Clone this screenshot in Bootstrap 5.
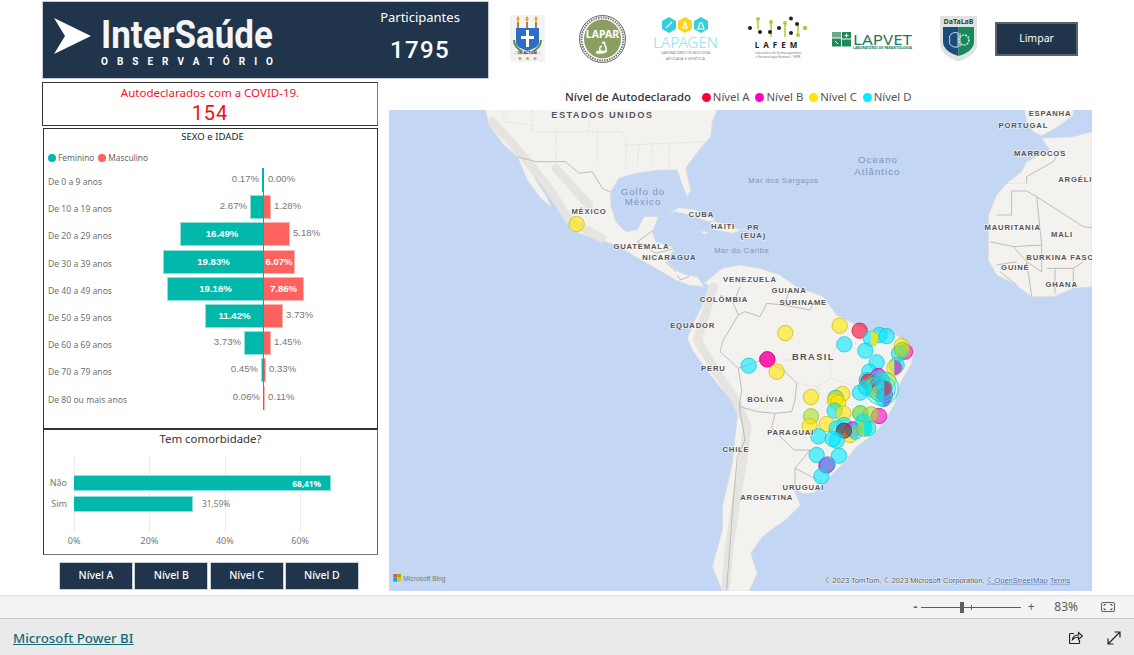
<!DOCTYPE html>
<html lang="pt-BR">
<head>
    <meta charset="UTF-8">
    <meta name="viewport" content="width=device-width, initial-scale=1.0">
    <title>InterSaúde Observatório</title>
    <link href="https://cdn.jsdelivr.net/npm/bootstrap@5.3.3/dist/css/bootstrap.min.css" rel="stylesheet">
    <style>
        html, body { height: 655px; overflow: hidden; }
        body { font-family: "Noto Sans", "Open Sans", sans-serif; color: #333; background: #fff; }

        .pbi-report { height: 595px; padding: 1px 0 0 42px; }

        /* top band */
        .brand-band { width: 447px; height: 78px; background: #20344c; color: #fff; box-shadow: 0 0 0 1px #c6ccd4 inset; }
        .brand-logo { width: 300px; height: 78px; }
        .brand-count { width: 130px; margin-left: 13px; }
        .brand-count-label { font-size: 13px; line-height: 18px; margin-top: 7px; }
        .brand-count-value { font-family: Roboto, sans-serif; font-weight: 500; font-size: 24px; letter-spacing: 1.3px; line-height: 32px; margin-top: 8px; }
        .lab-logo { flex: none; display: block; margin-bottom: 3px; overflow: visible; }
        .lab-uepb { width: 35px; height: 47px; margin-left: 21px; }
        .lab-lapar { width: 47px; height: 48px; margin-left: 34px; }
        .lab-lapagen { width: 65px; height: 44px; margin-left: 27px; }
        .lab-lafem { width: 60px; height: 43px; margin-left: 30px; }
        .lab-lapvet { width: 80px; height: 18px; margin: 2px 0 0 24px; }
        .lab-datalab { width: 39px; height: 47px; margin-left: 27px; }
        .btn-limpar { flex: none; width: 83px; height: 34px; margin: 0 0 3px 17px; padding: 0; background: #20344c; color: #fff; border: 2px solid #5d6268; border-radius: 0; font-size: 10.5px; }

        .body-row { margin-top: 3px; }

        /* left column */
        .side-col { width: 336px; flex: none; }
        .stat-box { height: 44px; border: 1px solid #333; border-right-color: #777; text-align: center; color: #f5132a; }
        .stat-box-label { font-size: 11.5px; line-height: 15px; margin-top: 2px; }
        .stat-box-value { font-family: Roboto, sans-serif; font-size: 20px; line-height: 24px; letter-spacing: 1px; margin-top: 1px; color: #f20d0d; }

        .pyr-box { height: 301px; margin: 2px 0 0 1px; border: 1px solid #333; padding: 0 0 0 4px; }
        .pyr-title { font-size: 9.6px; line-height: 14px; text-align: center; margin-top: 1px; color: #222; }
        .pyr-legend { font-size: 8.3px; color: #666; line-height: 12px; margin-top: 8px; margin-bottom: 4px; gap: 4px; }
        .pyr-dot { width: 8px; height: 8px; border-radius: 50%; display: inline-block; margin-right: 2px; vertical-align: -1px; }
        .dot-f { background: #01b8aa; }
        .dot-m { background: #fd625e; }
        .pyr-row { height: 27.2px; font-size: 9.6px; color: #777; }
        .pyr-row:last-child { height: 24px; }
        .pyr-label { width: 80px; flex: none; font-size: 8.6px; line-height: 24px; padding-top: 2px; color: #707070; white-space: nowrap; }
        .pyr-left { width: 136px; flex: none; border-right: 1px solid #7a7a7a; }
        .pyr-right { flex: 1; }
        .pyr-val { font-family: "Liberation Sans", sans-serif; line-height: 21px; margin: 0 3px; white-space: nowrap; }
        .pyr-bar { height: 24px; flex: none; font-family: "Liberation Sans", sans-serif; font-weight: 700; line-height: 22px; color: #fff; text-align: center; white-space: nowrap; }
        .bar-f { background: #01b8aa; border: 1px solid #8fe0d7; border-right: 0; }
        .bar-m { background: #fd625e; border: 1px solid #fdb3b0; border-left: 0; }

        .cmb-box { height: 126px; margin: 0 0 0 1px; border: 1px solid #333; border-color: #333 #666 #777 #333; }
        .cmb-title { font-size: 11.4px; line-height: 16px; text-align: center; margin-top: 1px; color: #333; }
        .cmb-body { margin-top: 9px; }
        .cmb-names { width: 30px; flex: none; padding: 19px 7px 0 0; text-align: right; font-size: 9px; color: #777; }
        .cmb-name { height: 16px; line-height: 15px; margin-bottom: 5px; }
        .cmb-plot { width: 270px; height: 76px; padding-top: 19px; background-image: repeating-linear-gradient(to right, #ececec 0, #ececec 1px, transparent 1px, transparent 75.33px); }
        .cmb-bar-row { height: 16px; margin-bottom: 5px; font-size: 8.3px; line-height: 16px; color: #777; }
        .cmb-bar { height: 16px; background: #01b8aa; border: 1px solid #8fe0d7; border-left: 0; color: #fff; font-weight: 700; text-align: right; padding-right: 9px; }
        .cmb-note { margin-left: 9px; }
        .cmb-ticks { margin: 3px 0 0 -7.5px; font-size: 9px; line-height: 12px; color: #777; }
        .cmb-tick { width: 75.33px; flex: none; text-align: center; }
        .level-row { margin: 7px 0 0 17px; gap: 1.3px; }
        .level-btn { width: 74px; height: 28px; padding: 0; border: 1px solid #c9d1da; border-radius: 0; background: #20344c; color: #fff; font-size: 10.5px; font-weight: 500; }

        /* map column */
        .map-col { width: 703px; flex: none; margin-left: 11px; }
        .map-legend { height: 28px; padding: 7px 0 0 176px; font-size: 11.3px; line-height: 15px; color: #555; white-space: nowrap; }
        .map-legend-title { color: #333; font-weight: 500; margin-right: 8px; }
        .map-legend-item { margin-right: 3px; }
        .map-dot { width: 9px; height: 9px; border-radius: 50%; display: inline-block; margin-right: 2px; vertical-align: -.5px; }
        .map-box { width: 703px; height: 481px; display: block; background: #c3d7f5; }
        .land { fill: #f3f2ef; stroke: #dcdbd7; stroke-width: 2; }
        .relief { fill: none; stroke: #e5e4e0; stroke-width: 26; stroke-linecap: round; stroke-linejoin: round; }
        .bd { fill: none; stroke: #b2b2b0; stroke-width: 2.5; }
        .bd-soft { fill: none; stroke: #d6d5d1; stroke-width: 2; stroke-dasharray: 6 4; }
        .ml { font-family: "Liberation Sans", sans-serif; font-weight: 700; font-size: 23px; letter-spacing: 2.5px; fill: #555; text-anchor: middle; paint-order: stroke; stroke: #fff; stroke-opacity: .6; stroke-width: 4px; }
        .ml-big { font-size: 28px; letter-spacing: 4px; }
        .ml-sea { font-family: "Liberation Sans", sans-serif; font-size: 23px; letter-spacing: 1.5px; fill: #7d94bb; text-anchor: middle; }
        .ml-ocean { font-size: 29px; letter-spacing: 3px; }
        .ml-attr { font-family: "Liberation Sans", sans-serif; font-size: 22.7px; fill: #555; paint-order: stroke; stroke: #fff; stroke-opacity: .7; stroke-width: 3px; }
        .ml-link { fill: #3f5fa8; text-decoration: underline; }
        .ml-bing { font-family: "Liberation Sans", sans-serif; font-size: 20px; fill: #777; }

        /* bottom bars */
        .zoom-bar { height: 24px; background: #f3f3f3; border-top: 1px solid #e2e2e2; border-bottom: 1px solid #c8c8c8; font-size: 12px; color: #605e5c; padding-right: 19px; }
        .zoom-sign { width: 12px; text-align: center; line-height: 20px; }
        .zoom-track { width: 100px; height: 1px; background: #605e5c; position: relative; margin: 0 4px 0 0; }
        .zoom-thumb { position: absolute; left: 39px; top: -5px; width: 4px; height: 11px; background: #605e5c; }
        .zoom-mid { position: absolute; left: 50px; top: -2px; width: 1px; height: 5px; background: #605e5c; }
        .zoom-pct { margin: 0 23px 0 17px; }
        .pbi-foot { height: 37px; background: #eaeaea; padding: 0 13px; }
        .pbi-link { font-size: 13.3px; font-weight: 500; color: #146c78; margin-top: 2px; }
    </style>
</head>
<body>
    <main class="pbi-report">
        <!-- top band with the lab logos -->
        <div class="d-flex align-items-center">
            <div class="brand-band d-flex flex-none">
                <svg class="brand-logo" viewBox="0 0 300 78">
                    <polygon points="12,17 49,35 12,53 23,35" fill="#fff"/>
                    <text x="59" y="47" font-family="Roboto, sans-serif" font-weight="700" font-size="39" fill="#f4f5f6" textLength="172" lengthAdjust="spacingAndGlyphs">InterSaúde</text>
                    <text x="59" y="64" font-family="Roboto, sans-serif" font-weight="700" font-size="10" fill="#fff" textLength="172">OBSERVATÓRIO</text>
                </svg>
                <div class="brand-count text-center">
                    <div class="brand-count-label">Participantes</div>
                    <div class="brand-count-value">1795</div>
                </div>
            </div>

            <svg class="lab-logo lab-uepb" viewBox="0 0 35 47">
                <rect width="35" height="47" fill="#f4f3f3"/>
                <path d="M8 1c2 2 2 4 0 6-2-2-2-4 0-6zM17 1c2 2 2 4 0 6-2-2-2-4 0-6zM26 1c2 2 2 4 0 6-2-2-2-4 0-6z" fill="#eba52a"/>
                <path d="M7 7h2v6H7zM16 7h2v6h-2zM25 7h2v6h-2z" fill="#a8863f"/>
                <path d="M6 13h23v14c0 5-6 7-11.5 9C12 34 6 32 6 27z" fill="#2a6fc4"/>
                <path d="M16 15h3v6h5v3h-5v8h-3v-8h-5v-3h5z" fill="#fff"/>
                <path d="M4 25c0 7 5 10 9 12M31 25c0 7-5 10-9 12" stroke="#5e8c4f" stroke-width="2" fill="none"/>
                <rect x="4" y="36" width="27" height="4" fill="#e8e4de"/>
                <text x="17.5" y="39.4" font-size="3.8" font-weight="700" text-anchor="middle" fill="#333">IN ALTUM</text>
                <circle cx="10" cy="43.5" r="1.6" fill="#c9a08e"/><circle cx="17.5" cy="43.5" r="1.6" fill="#c9a08e"/><circle cx="25" cy="43.5" r="1.6" fill="#c9a08e"/>
            </svg>
            <svg class="lab-logo lab-lapar" viewBox="0 0 47 48">
                <ellipse cx="23.5" cy="24" rx="23" ry="23.5" fill="#fff" stroke="#666" stroke-width="1"/>
                <ellipse cx="23.5" cy="24" rx="21" ry="21.5" fill="none" stroke="#777" stroke-width="2" stroke-dasharray="1.5 1"/>
                <ellipse cx="23.5" cy="24" rx="18.5" ry="19.5" fill="#8c9f63"/>
                <text x="23.5" y="23" font-size="10.5" font-weight="700" text-anchor="middle" fill="#fff">LAPAR</text>
                <path d="M25 27l2 6c1 3-1 5-4 5h-5v-1.500h10M23 28l3-1M22 36c-2-1-2-4 1-5" stroke="#fff" stroke-width="1.5" fill="none"/>
            </svg>
            <svg class="lab-logo lab-lapagen" viewBox="0 0 65 44">
                <polygon points="16,0 23,4 23,12 16,16 9,12 9,4" fill="#35cfdc"/>
                <polygon points="32,0 39,4 39,12 32,16 25,12 25,4" fill="#ffd21f"/>
                <polygon points="48,0 55,4 55,12 48,16 41,12 41,4" fill="#35cfdc"/>
                <path d="M13 11l6-6M30 11h4l-2-6zM45 12h6l-2-6h-2z" stroke="#fff" stroke-width="1.2" fill="none"/>
                <text x="0" y="30.5" font-size="15" font-weight="300" fill="#8de3e8" textLength="65" lengthAdjust="spacingAndGlyphs">LAPAGEN</text>
                <text x="32.5" y="36.5" font-size="3.7" text-anchor="middle" fill="#888">LABORATÓRIO DE BIOLOGIA</text>
                <text x="32.5" y="42.5" font-size="3.7" text-anchor="middle" fill="#888">APLICADA E GENÉTICA</text>
            </svg>
            <svg class="lab-logo lab-lafem" viewBox="0 0 60 43">
                <path d="M10 2v10M23 6v14M37 6v14M50 6v12" stroke="#a9cf38" stroke-width="1.5" fill="none"/>
                <circle cx="10" cy="2" r="2" fill="#a9cf38"/><circle cx="23" cy="5" r="2" fill="#a9cf38"/><circle cx="37" cy="6" r="2" fill="#a9cf38"/><circle cx="57" cy="11" r="2.2" fill="#a9cf38"/><circle cx="50" cy="18" r="2" fill="#a9cf38"/>
                <circle cx="2" cy="11" r="2" fill="#222"/><circle cx="12" cy="15" r="2" fill="#222"/><circle cx="22" cy="15" r="2" fill="#222"/><circle cx="31" cy="11" r="2" fill="#222"/><circle cx="43" cy="1.5" r="2" fill="#222"/><circle cx="49" cy="7" r="2" fill="#222"/><circle cx="43" cy="16" r="2" fill="#222"/>
                <text x="30" y="31" font-size="8" font-weight="700" text-anchor="middle" fill="#222" letter-spacing="4">LAFEM</text>
                <text x="30" y="36.5" font-size="3" text-anchor="middle" fill="#777">Laboratório de Farmacogenética</text>
                <text x="30" y="41" font-size="3" text-anchor="middle" fill="#777">e Farmacologia Humana - UEPB</text>
            </svg>
            <svg class="lab-logo lab-lapvet" viewBox="0 0 80 18">
                <rect x="0" y="0" width="9" height="5.5" fill="#6fa88c"/><rect x="0" y="6.5" width="9" height="8" fill="#1f8a5a"/>
                <rect x="10" y="0" width="9" height="6.5" fill="#1f8a5a"/><rect x="10" y="7.5" width="9" height="7" fill="#1f8a5a"/>
                <path d="M14.500 1.500v4M12.500 3.500h4M3 9l3 3" stroke="#fff" stroke-width="1"/>
                <text x="21" y="12.5" font-size="15" fill="#1d7a5e" textLength="59" lengthAdjust="spacingAndGlyphs">LAPVET</text>
                <text x="21" y="17" font-size="3" font-weight="700" fill="#1d7a5e" textLength="59" lengthAdjust="spacingAndGlyphs">LABORATÓRIO DE PARASITOLOGIA</text>
            </svg>
            <svg class="lab-logo lab-datalab" viewBox="0 0 39 47">
                <path d="M1 1h37v28c0 9-10 15-18.500 17.500C11 44 1 38 1 29z" fill="#dfe3e2"/>
                <text x="19.5" y="9" font-size="7.5" font-weight="700" text-anchor="middle" fill="#1d4c3c" textLength="30" lengthAdjust="spacingAndGlyphs">DaTaLaB</text>
                <path d="M4 12h15.500v29C12 39 4 34 4 27z" fill="#1c4b7c"/>
                <path d="M19.500 12H35v15c0 7-8 12-15.500 14z" fill="#17885a"/>
                <path d="M19 18c-6-2-10 3-8 7-2 3 1 8 8 7zM21 18v14" stroke="#cfe0e6" stroke-width="1" fill="none"/>
                <circle cx="25" cy="25" r="5" fill="none" stroke="#d5ead8" stroke-width="1.6" stroke-dasharray="2 1"/>
            </svg>
            <button type="button" class="btn btn-limpar">Limpar</button>
        </div>

        <div class="d-flex body-row">
            <div class="side-col">
                <div class="stat-box">
                    <div class="stat-box-label">Autodeclarados com a COVID-19.</div>
                    <div class="stat-box-value">154</div>
                </div>

                <section class="pyr-box">
                    <div class="pyr-title">SEXO e IDADE</div>
                    <div class="pyr-legend d-flex">
                        <span><i class="pyr-dot dot-f"></i>Feminino</span>
                        <span><i class="pyr-dot dot-m"></i>Masculino</span>
                    </div>
                    <div class="d-flex pyr-row">
                        <div class="pyr-label">De 0 a 9 anos</div>
                        <div class="pyr-left d-flex justify-content-end"><span class="pyr-val">0.17%</span><div class="pyr-bar bar-f" style="width:1px;border:0"></div></div>
                        <div class="pyr-right d-flex"><div class="pyr-bar" style="width:1px"></div><span class="pyr-val">0.00%</span></div>
                    </div>
                    <div class="d-flex pyr-row">
                        <div class="pyr-label">De 10 a 19 anos</div>
                        <div class="pyr-left d-flex justify-content-end"><span class="pyr-val">2.67%</span><div class="pyr-bar bar-f" style="width:13px"></div></div>
                        <div class="pyr-right d-flex"><div class="pyr-bar bar-m" style="width:7px"></div><span class="pyr-val">1.28%</span></div>
                    </div>
                    <div class="d-flex pyr-row">
                        <div class="pyr-label">De 20 a 29 anos</div>
                        <div class="pyr-left d-flex justify-content-end"><div class="pyr-bar bar-f" style="width:83px">16.49%</div></div>
                        <div class="pyr-right d-flex"><div class="pyr-bar bar-m" style="width:26px"></div><span class="pyr-val">5.18%</span></div>
                    </div>
                    <div class="d-flex pyr-row">
                        <div class="pyr-label">De 30 a 39 anos</div>
                        <div class="pyr-left d-flex justify-content-end"><div class="pyr-bar bar-f" style="width:100px">19.83%</div></div>
                        <div class="pyr-right d-flex"><div class="pyr-bar bar-m" style="width:31px">6.07%</div></div>
                    </div>
                    <div class="d-flex pyr-row">
                        <div class="pyr-label">De 40 a 49 anos</div>
                        <div class="pyr-left d-flex justify-content-end"><div class="pyr-bar bar-f" style="width:96px">19.16%</div></div>
                        <div class="pyr-right d-flex"><div class="pyr-bar bar-m" style="width:40px">7.86%</div></div>
                    </div>
                    <div class="d-flex pyr-row">
                        <div class="pyr-label">De 50 a 59 anos</div>
                        <div class="pyr-left d-flex justify-content-end"><div class="pyr-bar bar-f" style="width:58px">11.42%</div></div>
                        <div class="pyr-right d-flex"><div class="pyr-bar bar-m" style="width:19px"></div><span class="pyr-val">3.73%</span></div>
                    </div>
                    <div class="d-flex pyr-row">
                        <div class="pyr-label">De 60 a 69 anos</div>
                        <div class="pyr-left d-flex justify-content-end"><span class="pyr-val">3.73%</span><div class="pyr-bar bar-f" style="width:19px"></div></div>
                        <div class="pyr-right d-flex"><div class="pyr-bar bar-m" style="width:7px"></div><span class="pyr-val">1.45%</span></div>
                    </div>
                    <div class="d-flex pyr-row">
                        <div class="pyr-label">De 70 a 79 anos</div>
                        <div class="pyr-left d-flex justify-content-end"><span class="pyr-val">0.45%</span><div class="pyr-bar bar-f" style="width:2px"></div></div>
                        <div class="pyr-right d-flex"><div class="pyr-bar bar-m" style="width:2px"></div><span class="pyr-val">0.33%</span></div>
                    </div>
                    <div class="d-flex pyr-row">
                        <div class="pyr-label">De 80 ou mais anos</div>
                        <div class="pyr-left d-flex justify-content-end"><span class="pyr-val">0.06%</span></div>
                        <div class="pyr-right d-flex"><div class="pyr-bar bar-m" style="width:1px"></div><span class="pyr-val">0.11%</span></div>
                    </div>
                </section>

                <section class="cmb-box">
                    <div class="cmb-title">Tem comorbidade?</div>
                    <div class="cmb-body d-flex">
                        <div class="cmb-names">
                            <div class="cmb-name">Não</div>
                            <div class="cmb-name">Sim</div>
                        </div>
                        <div class="cmb-plot">
                            <div class="cmb-bar-row d-flex"><div class="cmb-bar" style="width:257px">68,41%</div></div>
                            <div class="cmb-bar-row d-flex"><div class="cmb-bar" style="width:119px"></div><span class="cmb-note">31,59%</span></div>
                        </div>
                    </div>
                    <div class="cmb-ticks d-flex">
                        <span class="cmb-tick">0%</span><span class="cmb-tick">20%</span><span class="cmb-tick">40%</span><span class="cmb-tick">60%</span>
                    </div>
                </section>

                <div class="level-row d-flex">
                    <button type="button" class="btn level-btn">Nível A</button>
                    <button type="button" class="btn level-btn">Nível B</button>
                    <button type="button" class="btn level-btn">Nível C</button>
                    <button type="button" class="btn level-btn">Nível D</button>
                </div>
            </div>

            <div class="map-col">
                <div class="map-legend">
                    <span class="map-legend-title">Nível de Autodeclarado</span>
                    <span class="map-legend-item"><i class="map-dot" style="background:#ff0033"></i>Nível A</span>
                    <span class="map-legend-item"><i class="map-dot" style="background:#ff00c8"></i>Nível B</span>
                    <span class="map-legend-item"><i class="map-dot" style="background:#ffe600"></i>Nível C</span>
                    <span class="map-legend-item"><i class="map-dot" style="background:#00eeff"></i>Nível D</span>
                </div>

                <!-- map drawn at 3x: 1 unit = 1/3 px -->
                <svg class="map-box" viewBox="0 0 2109 1443">
                    <g transform="translate(0,-15)">
                        <path class="land" d="M285 0L300 60 345 120 385 155 392 170 415 225 455 280 487 307 470 270 440 225 415 170 425 172 470 225 520 295 530 340 545 375 600 395 680 420 740 455 800 490 860 525 900 540 945 545 925 515 890 510 860 495 830 465 860 430 800 410 790 380 808 335 765 335 745 375 710 380 680 350 665 300 665 260 690 220 740 205 810 195 865 195 880 240 895 275 905 255 890 190 930 135 965 95 970 50 990 0Z"/>
                        <path class="land" d="M840 325L870 308 920 315 980 345 960 350 900 330 860 320Z"/>
                        <path class="land" d="M965 348L1000 355 1056 375 1030 385 965 372Z"/>
                        <path class="land" d="M932 378L960 382 945 388Z"/>
                        <path class="relief" d="M310 50L400 150 480 250 545 350 640 400M500 190L600 300"/>
                        <path class="bd" d="M385 155L440 170 530 170 570 205 610 200 640 250 665 262"/>
                        <path class="bd-soft" d="M345 15V50L430 60V15M430 60V80L600 80V15M600 80H700L715 120 960 110M500 80V165M625 80V180M710 120V190M750 120L745 180M790 115V185M840 115V190"/>
                        <path class="bd" d="M745 410L790 378M745 410L800 445 860 430M830 470L860 500M865 510L875 525 900 515"/>
                    </g>
                    <g transform="translate(1053,-15)">
                        <path class="land" d="M850 0L860 50 880 80 905 92 945 70 975 50 1000 30 1000 0Z"/>
                        <path class="land" d="M905 100L1000 95 1056 80V545L1000 550 940 575 875 575 820 535 770 510 745 465 745 400 745 330 770 270 800 235 845 200 860 170 930 135Z"/>
                        <path class="bd" d="M770 330H815V258H860L890 275 905 420 820 425 750 410M890 275L1030 365 1056 368M905 420V500L860 470 820 425M860 470L875 575M920 490H1000L1030 470M1000 490V550M945 490V565M860 235V215L940 170 960 135M770 480L830 470M780 500L830 540"/>
                        <path class="bd-soft" d="M800 235H855"/>
                        <path class="land" d="M5 370L18 372 8 376Z"/>
                    </g>
                    <path class="land" d="M945 520L1000 475 1053 465 1113 475 1173 495 1223 530 1303 560 1343 615 1353 620 1433 660 1523 675 1573 720 1568 760 1533 820 1518 880 1488 930 1458 970 1403 1010 1363 1060 1323 1100 1273 1150 1240 1150 1210 1130 1235 1185 1190 1230 1160 1250 1120 1280 1085 1330 1105 1390 1080 1443 1000 1443 970 1370 1000 1260 1000 1190 1030 1060 1045 920 1050 890 1000 840 960 790 910 720 895 685 920 625 945 575 960 525Z"/>
                    <path class="relief" d="M975 530L940 640 925 690 985 790 1040 870 1075 950 1060 1060 1040 1180 1020 1320 1010 1430"/>
                    <g transform="translate(933,570)">
                        <path class="bd" d="M60 155L70 120 115 45 100 10 120 -40M115 45L135 35 180 50 200 10 250 15 270 -30M250 15L330 30 345 0M60 155L115 205 125 270 118 318 135 420 112 470 100 600 80 870"/>
                        <path class="bd" d="M115 205L185 180 250 210 290 250 285 300 275 335 225 340 215 385 282 450 330 450 285 505 335 530 365 545M225 340L172 335 120 320M285 505V560"/>
                        <path class="bd-soft" d="M250 180H390L420 120 470 130M390 180L395 235 350 260 290 250M395 235L500 270M350 260L390 330 470 350"/>
                    </g>
                    <g id="map-bubbles"></g>

                    <!-- labels -->
                    <g transform="translate(0,-15)">
                        <text class="ml ml-big" x="640" y="38">ESTADOS UNIDOS</text>
                        <text class="ml" x="600" y="326">MÉXICO</text>
                        <text class="ml-sea ml-ocean" x="762" y="270">Golfo do</text>
                        <text class="ml-sea ml-ocean" x="762" y="300">México</text>
                        <text class="ml" x="937" y="336">CUBA</text>
                        <text class="ml" x="1002" y="372">HAITI</text>
                        <text class="ml" x="757" y="431">GUATEMALA</text>
                        <text class="ml" x="841" y="465">NICARAGUA</text>
                        <text class="ml" x="911" y="669">EQUADOR</text>
                        <text class="ml" x="1005" y="592">COLÔMBIA</text>
                        <text class="ml-sea" x="1058" y="443">Mar do Caribe</text>
                    </g>
                    <g transform="translate(1053,-15)">
                        <text class="ml-sea ml-ocean" x="414" y="175">Oceano</text>
                        <text class="ml-sea ml-ocean" x="412" y="209">Atlântico</text>
                        <text class="ml-sea" x="130" y="234">Mar dos Sargaços</text>
                        <text class="ml" x="40" y="375">PR</text>
                        <text class="ml" x="40" y="400">(EUA)</text>
                        <text class="ml" x="30" y="530">VENEZUELA</text>
                        <text class="ml" x="147" y="564">GUIANA</text>
                        <text class="ml" x="190" y="600">SURINAME</text>
                        <text class="ml" x="930" y="33">ESPANHA</text>
                        <text class="ml" x="850" y="69">PORTUGAL</text>
                        <text class="ml" x="900" y="152">MARROCOS</text>
                        <text class="ml" x="1015" y="232">ARGÉLIA</text>
                        <text class="ml" x="818" y="375">MAURITANIA</text>
                        <text class="ml" x="966" y="395">MALI</text>
                        <text class="ml" x="961" y="465">BURKINA FASO</text>
                        <text class="ml" x="826" y="495">GUINÉ</text>
                        <text class="ml" x="965" y="545">GHANA</text>
                    </g>
                    <g transform="translate(933,570)">
                        <text class="ml ml-big" x="340" y="181">BRASIL</text>
                        <text class="ml" x="40" y="212">PERU</text>
                        <text class="ml" x="197" y="305">BOLÍVIA</text>
                        <text class="ml" x="272" y="406">PARAGUAI</text>
                        <text class="ml" x="108" y="455">CHILE</text>
                        <text class="ml" x="310" y="570">URUGUAI</text>
                        <text class="ml" x="200" y="601">ARGENTINA</text>
                    </g>

                    <!-- map attribution -->
                    <rect x="13" y="1392" width="11" height="11" fill="#f25022"/><rect x="25" y="1392" width="11" height="11" fill="#7fba00"/>
                    <rect x="13" y="1404" width="11" height="11" fill="#00a4ef"/><rect x="25" y="1404" width="11" height="11" fill="#ffb900"/>
                    <text class="ml-bing" x="43" y="1412">Microsoft Bing</text>
                    <text class="ml-attr" x="1307" y="1418">© 2023 TomTom, © 2023 Microsoft Corporation, <tspan class="ml-link">© OpenStreetMap</tspan>  <tspan class="ml-link">Terms</tspan></text>
                </svg>
            </div>
        </div>
    </main>

    <div class="zoom-bar d-flex align-items-center justify-content-end">
        <span class="zoom-sign fw-bold">-</span>
        <div class="zoom-track"><div class="zoom-thumb"></div><div class="zoom-mid"></div></div>
        <span class="zoom-sign">+</span>
        <span class="zoom-pct">83%</span>
        <svg width="14" height="10" viewBox="0 0 14 10" fill="none" stroke="#605e5c">
            <rect x=".5" y=".5" width="13" height="9" rx="1.5"/>
            <path d="M3 4V2.500H5M9 2.500h2V4M3 6v1.500H5M9 7.500h2V6"/>
        </svg>
    </div>
    <footer class="pbi-foot d-flex align-items-center justify-content-between">
        <a class="pbi-link" href="#">Microsoft Power BI</a>
        <div class="d-flex align-items-center gap-4 pe-0">
            <svg width="14" height="14" viewBox="0 0 14 14" fill="none" stroke="#222" stroke-width="1.2">
                <path d="M5 2.500H1.500a1 1 0 0 0-1 1v8a1 1 0 0 0 1 1h8a1 1 0 0 0 1-1V9"/>
                <path d="M3.500 8.500c.5-3 3-4.500 6-4.500V1.500L13.500 5l-4 3.500V6c-2.500 0-4.500 1-6 2.500z"/>
            </svg>
            <svg width="14" height="14" viewBox="0 0 14 14" fill="none" stroke="#222" stroke-width="1.2">
                <path d="M1 13L13 1M7.500 1H13V6.500M1 7.500V13H6.500"/>
            </svg>
        </div>
    </footer>

    <script>
// bubbles: x, y in the 3x frame of the Brazil crop, level, optional level of the right half
var colours = {
    A: ['#ff0033', '#d0103a'], B: ['#ff00c8', '#d800a8'], C: ['#ffe600', '#c8b818'], D: ['#00e8ff', '#14c4d2'],
    X: ['#7a2038', '#6a2a3a'], L: ['#a8e02a', '#8fb820'], P: ['#a24fe0', '#8a40c0'], S: ['#35aaf0', '#2a90c8']
};
var bubbles = [
    [-370, -228, 'C'], [256, 99, 'C'], [419, 77, 'C'], [479, 92, 'A'], [538, 105, 'D'], [560, 108, 'D'], [513, 116, 'D', 'C'],
    [433, 133, 'D'], [496, 152, 'D'], [615, 155, 'B'], [605, 138, 'C'], [597, 160, 'D'], [606, 150, 'L'],
    [146, 197, 'D'], [202, 178, 'A'], [202, 178, 'B'], [230, 215, 'C'],
    [530, 187, 'D'], [590, 195, 'D'], [583, 203, 'C', 'P'], [508, 215, 'D'], [535, 228, 'B'], [500, 240, 'D'], [512, 250, 'C'],
    [505, 245, 'A'], [480, 278, 'D'], [498, 262, 'D'], [525, 255, 'C'], [535, 250, 'B'], [565, 240, 'C'], [520, 270, 'D'],
    [540, 262, 'A'], [545, 240, 'D'], [535, 280, 'C'], [555, 285, 'B'], [550, 297, 'D', 'P'], [553, 265, 'D', 'A'],
    [427, 282, 'C'], [333, 291, 'C'], [407, 293, 'D'], [407, 296, 'C'], [405, 302, 'C'], [414, 308, 'C'], [404, 332, 'D'], [430, 340, 'C'],
    [333, 349, 'L'], [329, 378, 'C'], [380, 372, 'C'], [537, 348, 'B'], [481, 340, 'D'], [481, 340, 'L'], [513, 343, 'L'],
    [432, 375, 'D'], [458, 388, 'B'], [450, 405, 'C'], [465, 395, 'D'], [410, 385, 'D'], [490, 365, 'D'], [505, 385, 'D'], [493, 386, 'L', 'D'],
    [432, 392, 'X'], [355, 409, 'D'], [410, 422, 'D'], [398, 417, 'D'], [350, 465, 'D'], [417, 467, 'D'], [379, 497, 'B'], [383, 493, 'S'], [364, 529, 'D']
];
var html = '';
var rad = 23;
bubbles.forEach(function (b) {
    var x = b[0] + 933, y = b[1] + 570, c = colours[b[2]];
    html += '<circle cx="' + x + '" cy="' + y + '" r="' + rad + '" fill="' + c[0] + '" fill-opacity=".6" stroke="' + c[1] + '" stroke-opacity=".9" stroke-width="2.5"/>';
    if (b[3]) {
        html += '<path d="M' + x + ' ' + (y - rad) + 'A' + rad + ' ' + rad + ' 0 0 1 ' + x + ' ' + (y + rad) + 'Z" fill="' + colours[b[3]][0] + '" fill-opacity=".85"/>';
    }
});
// large rings over the Recife cluster
[50, 41, 32].forEach(function (r) {
    html += '<circle cx="' + (545 + 933) + '" cy="' + (265 + 570) + '" r="' + r + '" fill="#00e8ff" fill-opacity=".12" stroke="#19d8d8" stroke-width="3"/>';
});
document.getElementById('map-bubbles').innerHTML = html;
    </script>
    <script src="https://cdn.jsdelivr.net/npm/bootstrap@5.3.3/dist/js/bootstrap.bundle.min.js"></script>
</body>
</html>
